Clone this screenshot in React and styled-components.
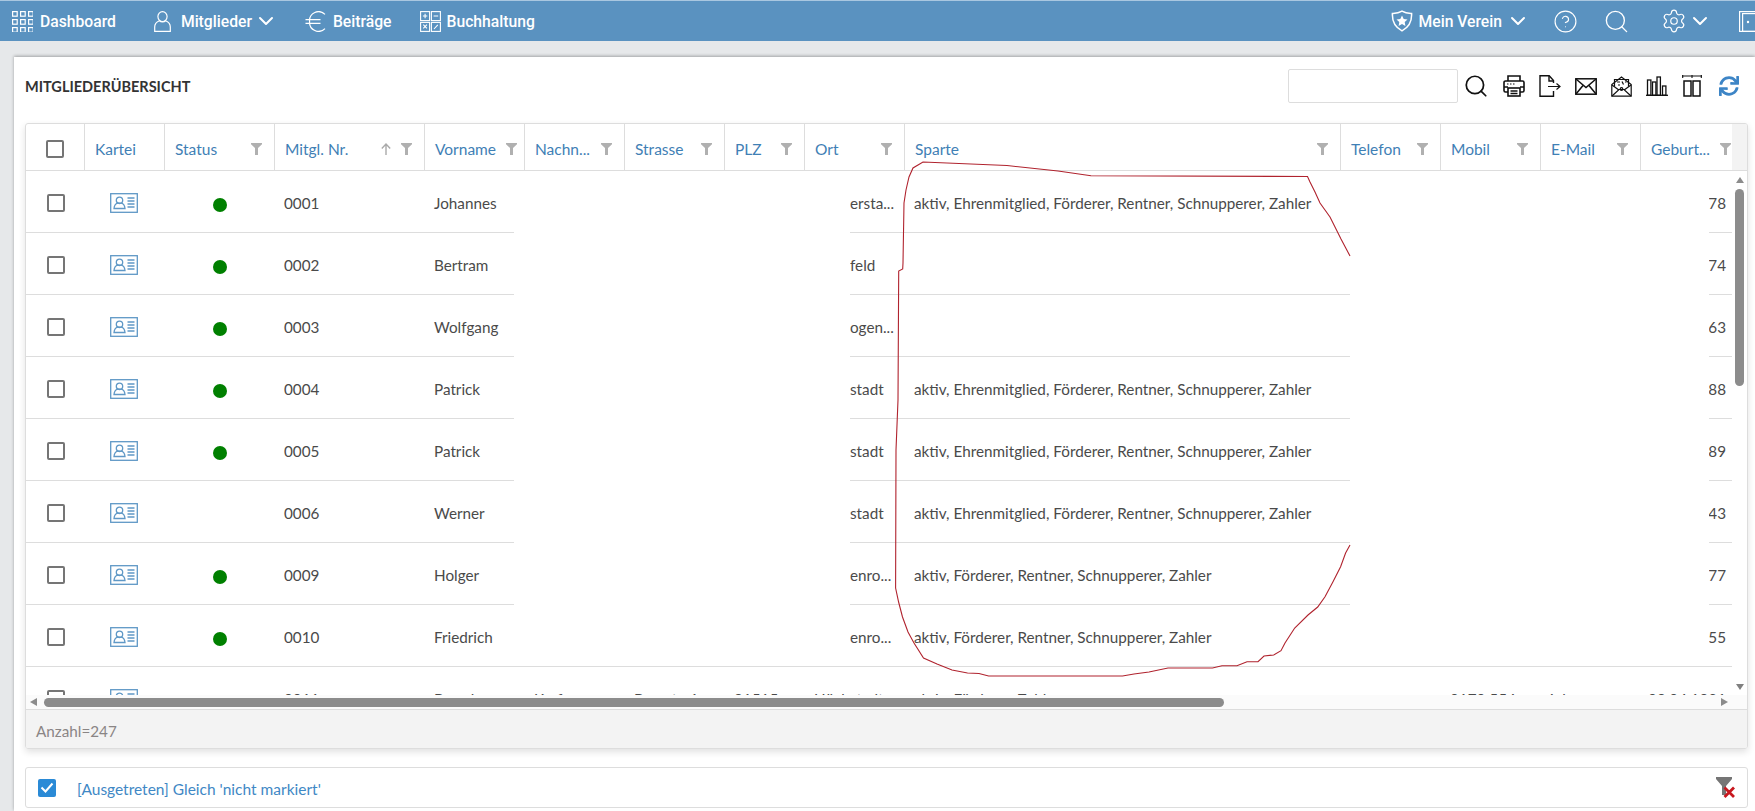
import React from 'react';
import styled, { createGlobalStyle } from 'styled-components';
import { ChevronDown, CircleHelp, Search, Settings } from 'lucide-react';
import { FaSync } from 'react-icons/fa';

const GlobalStyle = createGlobalStyle`
    html, body { margin: 0; padding: 0; height: 100%; }
    body { font-family: "Lato", "Noto Sans", sans-serif; background: #e6e8ea; }
    * { box-sizing: border-box; }
`;

const COLUMNS = '59px 80px 110px 150px 100px 100px 100px 80px 100px 436px 100px 100px 100px 91px';

const Page = styled.div`
    height: 100vh;
    display: flex;
    flex-direction: column;
    overflow: hidden;
`;
const Nav = styled.nav`
    height: 41px;
    flex: none;
    display: flex;
    align-items: center;
    padding-left: 12px;
    background: #5a92c0;
    border-top: 1px solid #a9c7e0;
    color: #fff;
    overflow: hidden;
`;
const NavItem = styled.div`
    display: flex;
    align-items: center;
    flex: none;
    gap: ${(p) => p.$gap ?? 7}px;
    margin-left: ${(p) => p.$ml || 0}px;
    font: 500 15.7px "Roboto", sans-serif;
    white-space: nowrap;
`;
const NavLabel = styled.span`
    display: flex;
    align-items: center;
    gap: ${(p) => p.$gap || 2}px;
`;
const NavRight = styled.div`
    margin-left: auto;
    margin-right: -6px;
    display: flex;
    align-items: center;
`;
const Main = styled.main`
    flex: 1;
    min-height: 0;
    padding: 16px 0 0 14px;
`;
const Card = styled.section`
    height: 100%;
    padding: 12px 7px 0 11px;
    background: #fff;
    box-shadow: 0 -1px 3px rgba(0, 0, 0, 0.3);
`;
const TitleBar = styled.div`
    height: 34px;
    margin-bottom: 20px;
    display: flex;
    align-items: center;
    justify-content: space-between;
`;
const Title = styled.h1`
    margin: 0;
    font-size: 14.5px;
    font-weight: 700;
    color: #333;
`;
const Tools = styled.div`
    display: flex;
    align-items: center;
    gap: 14px;
`;
const SearchInput = styled.input`
    width: 170px;
    height: 34px;
    margin-right: -9px;
    border: 1px solid #ddd;
    border-radius: 2px;
    outline: none;
`;
const RefreshIcon = styled(FaSync)`
    margin: 0 9px 0 3px;
    color: #3d85c6;
`;
const TableFrame = styled.div`
    position: relative;
    height: 626px;
    border: 1px solid #ddd;
    border-radius: 3px;
    box-shadow: 0 3px 7px rgba(0, 0, 0, 0.12);
    overflow: hidden;
`;
const HeaderRow = styled.div`
    display: grid;
    grid-template-columns: ${COLUMNS} 1fr;
    height: 47px;
    border-bottom: 1px solid #ddd;
`;
const HeaderCell = styled.div`
    display: flex;
    align-items: center;
    gap: 10px;
    padding: 3px 12px 0 10px;
    border-right: 1px solid #ddd;
    color: #3f80b5;
    font-size: 15.5px;
    &:nth-child(14) { border-right: none; padding-right: 3px; }
    &:last-child { border-right: none; background: #f3f3f3; padding: 0; }
`;
const CheckHeaderCell = styled(HeaderCell)`
    justify-content: center;
    padding: 3px 0 0;
`;
const HeaderLabel = styled.span`
    flex: 1;
    white-space: nowrap;
`;
const Body = styled.div`
    display: flex;
    height: 524px;
`;
const RowsViewport = styled.div`
    flex: 1;
    overflow: hidden;
`;
const Row = styled.div`
    display: grid;
    grid-template-columns: ${COLUMNS};
    height: 62px;
    border-bottom: 1px solid #ddd;
`;
const Cell = styled.div`
    display: flex;
    align-items: center;
    justify-content: ${(p) => p.$justify || 'flex-start'};
    padding: 3px ${(p) => p.$pr || 0}px 0 ${(p) => p.$pl || 0}px;
    color: #4a4a4a;
    font-size: 15.25px;
    white-space: nowrap;
    overflow: hidden;
`;
const Checkbox = styled.span`
    display: inline-flex;
    align-items: center;
    justify-content: center;
    width: 18px;
    height: 18px;
    flex: none;
    border: ${(p) => (p.$checked ? 'none' : '2px solid #757575')};
    border-radius: 2px;
    background: ${(p) => (p.$checked ? '#2a8ad6' : '#fff')};
`;
const Dot = styled.span`
    width: 14px;
    height: 14px;
    margin-top: 3px;
    border-radius: 50%;
    background: #008000;
`;
const VScroll = styled.div`
    width: 15px;
    flex: none;
    display: flex;
    flex-direction: column;
    align-items: center;
    padding: 6px 0 5px;
    background: #fff;
`;
const VThumb = styled.div`
    width: 9px;
    height: 197px;
    margin-top: 6px;
    border-radius: 5px;
    background: #8c8c8c;
`;
const ArrowUp = styled.i`
    border: 4.5px solid transparent;
    border-top: none;
    border-bottom: 6px solid #8c8c8c;
`;
const ArrowDown = styled.i`
    margin-top: auto;
    border: 4.5px solid transparent;
    border-bottom: none;
    border-top: 6px solid #808080;
`;
const HScroll = styled.div`
    height: 14px;
    display: flex;
    align-items: center;
    padding-left: 4px;
    background: #fbfbfb;
`;
const ArrowLeft = styled.i`
    border: 4.5px solid transparent;
    border-left: none;
    border-right: 7px solid #8c8c8c;
`;
const ArrowRight = styled.i`
    margin-left: auto;
    margin-right: 19px;
    border: 4.5px solid transparent;
    border-right: none;
    border-left: 7px solid #8c8c8c;
`;
const HThumb = styled.div`
    width: 1180px;
    height: 9px;
    margin-left: 7px;
    border-radius: 5px;
    background: #8c8c8c;
`;
const Footer = styled.div`
    height: 40px;
    display: flex;
    align-items: center;
    padding: 2px 0 0 10px;
    border-top: 1px solid #ddd;
    background: #f3f3f3;
    color: #8a8585;
    font-size: 15.25px;
`;
const Redaction = styled.div`
    position: absolute;
    top: 47px;
    left: ${(p) => p.$left}px;
    width: ${(p) => p.$width}px;
    height: 494px;
    background: #fff;
`;
const Scribble = styled.svg`
    position: absolute;
    left: -26px;
    top: -124px;
    pointer-events: none;
`;
const FilterBar = styled.div`
    height: 41px;
    margin-top: 18px;
    display: flex;
    align-items: center;
    gap: 21px;
    padding: 0 11px 0 12px;
    border: 1px solid #ddd;
    border-radius: 3px;
    color: #3f88c5;
    font-size: 15.5px;
`;
const FilterText = styled.span`
    flex: 1;
    padding-top: 3px;
`;

const Grid9 = () => (
    <svg width="21" height="21" viewBox="0 0 21 21" fill="none" stroke="#fff" strokeWidth="1.2">
        {[0, 8, 16].map((y) =>
            [0, 8, 16].map((x) => <rect key={`${x}${y}`} x={x + 0.6} y={y + 0.6} width="4.6" height="4.6" />)
        )}
    </svg>
);
const PersonIcon = () => (
    <svg width="17" height="21" viewBox="0 0 17 21" fill="none" stroke="#fff" strokeWidth="1.2">
        <ellipse cx="8.5" cy="5.6" rx="4.6" ry="4.9" />
        <path d="M5.4 9.8C2.6 11 .7 13 .7 16v4.3h15.6V16c0-3-1.9-5-4.7-6.2-1.6 1.5-4.6 1.5-6.2 0z" />
    </svg>
);
const EuroIcon = () => (
    <svg width="21" height="21" viewBox="0 0 21 21" fill="none" stroke="#fff" strokeWidth="1.2">
        <path d="M20 3.4A9 9 0 0 0 4.6 10.5 9 9 0 0 0 20 17.6" />
        <path d="M.5 8.7h15M.5 12.3h15" />
    </svg>
);
const CalcIcon = () => (
    <svg width="21" height="21" viewBox="0 0 21 21" fill="none" stroke="#fff" strokeWidth="1.1">
        <rect x=".6" y=".6" width="9" height="9" />
        <rect x="11.4" y=".6" width="9" height="9" />
        <rect x=".6" y="11.4" width="9" height="9" />
        <rect x="11.4" y="11.4" width="9" height="9" />
        <path d="M5.1 2.8v4.4M2.9 5h4.4M13.6 5h4.6M3.3 13.600l3.600 3.800M6.900 13.600l-3.600 3.800M14 18l3.800-4.200" />
    </svg>
);
const ShieldStar = () => (
    <svg width="22" height="22" viewBox="0 0 22 22" fill="none">
        <path d="M11 1.200c2.400 1.500 5.400 2.300 9.600 2.200.4 7.800-2.800 14-9.600 17.400C4.200 17.400 1 11.200 1.400 3.400 5.600 3.500 8.600 2.700 11 1.200z" stroke="#fff" strokeWidth="1.5" />
        <path d="M11 5.500l1.700 3.500 3.800.5-2.800 2.600.7 3.800-3.400-1.800-3.400 1.800.7-3.800-2.800-2.600 3.800-.5z" fill="#fff" />
    </svg>
);
const DoorIcon = () => (
    <svg width="22" height="21" viewBox="0 0 22 21" fill="none" stroke="#fff" strokeWidth="1.2">
        <rect x=".6" y=".6" width="24" height="19.8" />
        <rect x="3.6" y="2.6" width="20" height="17.8" />
        <circle cx="9" cy="11" r=".6" fill="#fff" />
    </svg>
);
const FunnelIcon = () => (
    <svg width="11" height="12" viewBox="0 0 11 12" fill="#b0b0b0" style={{ flex: 'none' }}>
        <path d="M0 0h11v1.200L7 5v7H4V5L0 1.200z" />
    </svg>
);
const SortUp = () => (
    <svg width="10" height="12" viewBox="0 0 10 12" fill="none" stroke="#aaa" strokeWidth="1.4" style={{ flex: 'none' }}>
        <path d="M5 12V1M.8 5.400 5 1l4.200 4.400" />
    </svg>
);
const MemberCard = () => (
    <svg width="28" height="20" viewBox="0 0 28 20" fill="none" stroke="#5f98c6" strokeWidth="1.3">
        <rect x=".7" y=".7" width="26.6" height="18.6" />
        <circle cx="9.5" cy="7.3" r="3.2" />
        <path d="M4 15.500c.3-3 2.200-5 3.600-5.400h3.800c1.400.4 3.300 2.400 3.600 5.400z" />
        <path d="M17.5 5h7M17.5 8h7M17.5 11h7M17.5 14h7" />
    </svg>
);
const PrintIcon = () => (
    <svg width="22" height="22" viewBox="0 0 22 22" fill="none" stroke="#111" strokeWidth="1.6">
        <path d="M5 6V1h12v5" />
        <path d="M5 17H2.500A1.500 1.500 0 0 1 1 15.500v-8A1.500 1.500 0 0 1 2.500 6h17A1.500 1.500 0 0 1 21 7.500v8a1.500 1.500 0 0 1-1.500 1.500H17" />
        <rect x="5" y="13" width="12" height="8" />
        <path d="M7.500 16h7M7.500 18.500h7M1 12h4M17 12h4" />
        <path d="M4 9h1.500M7 9h1.500M10 9h1.500" strokeWidth="1.2" />
    </svg>
);
const ExportIcon = () => (
    <svg width="22" height="22" viewBox="0 0 22 22" fill="none" stroke="#111" strokeWidth="1.4">
        <path d="M14.500 8V5.500L10.200.8H1v20.400h13.500V16" />
        <path d="M10 1v5h4.500" />
        <path d="M9 11.500h12M17.500 8.500l3.500 3-3.500 3" strokeWidth="1.2" />
    </svg>
);
const MailIcon = () => (
    <svg width="22" height="17" viewBox="0 0 22 17" fill="none" stroke="#111" strokeWidth="1.5">
        <rect x=".8" y=".8" width="20.4" height="15.4" />
        <path d="M1 1l10 8.500L21 1M1 16l7-8.500M21 16l-7-8.500" />
    </svg>
);
const PaidMailIcon = () => (
    <svg width="21" height="21" viewBox="0 0 21 21" fill="none" stroke="#111" strokeWidth="1.2">
        <path d="M.8 8.500v11.700h19.400V8.500L10.500 1z" />
        <path d="M3.500 10.500V3.500h14v7" />
        <path d="M1 20l7-6.500h5l7 6.500M1 9l6.500 4.800M20 9l-6.500 4.800" />
        <path d="M6 6h3M11 5.500l1.500 3M14 6h1.500M7 9h2" />
        <circle cx="10.5" cy="13" r="1.3" />
    </svg>
);
const ChartIcon = () => (
    <svg width="22" height="20" viewBox="0 0 22 20" fill="none" stroke="#111" strokeWidth="1.3">
        <path d="M0 19.300h22" />
        <rect x="1.5" y="4" width="3.4" height="15.3" />
        <rect x="6.5" y="6" width="3.4" height="13.3" />
        <rect x="11" y="1" width="3.4" height="18.3" />
        <rect x="16.5" y="10" width="3.4" height="9.3" />
    </svg>
);
const ColumnsIcon = () => (
    <svg width="20" height="22" viewBox="0 0 20 22" fill="none" stroke="#111" strokeWidth="1.5">
        <path d="M0 1h20M.7 0v3M19.300 0v3M10 0v3" strokeWidth="1.1" />
        <rect x="2" y="6" width="7" height="15" />
        <rect x="11" y="6" width="7" height="15" />
    </svg>
);
const ClearFilter = () => (
    <svg width="20" height="21" viewBox="0 0 20 21">
        <path d="M0 0h16v2L10 9v9H6V9L0 2z" fill="#757575" />
        <path d="M8.500 10.500l9.500 9.500M18 10.500l-9.500 9.500" stroke="#c8171e" strokeWidth="2.8" />
    </svg>
);
const Tick = () => (
    <svg width="14" height="11" viewBox="0 0 14 11" fill="none" stroke="#fff" strokeWidth="2">
        <path d="M1.500 5.500 5.500 9.500 12.500 1.500" />
    </svg>
);

const HEADERS = ['Kartei', 'Status', 'Mitgl. Nr.', 'Vorname', 'Nachn...', 'Strasse', 'PLZ', 'Ort', 'Sparte', 'Telefon', 'Mobil', 'E-Mail', 'Geburt...'];
const FULL = 'aktiv, Ehrenmitglied, Förderer, Rentner, Schnupperer, Zahler';
const SHORT = 'aktiv, Förderer, Rentner, Schnupperer, Zahler';

const ROWS = [
    { nr: '0001', first: 'Johannes', ort: 'ersta...', sparte: FULL, age: '78', active: true },
    { nr: '0002', first: 'Bertram', ort: 'feld', sparte: '', age: '74', active: true },
    { nr: '0003', first: 'Wolfgang', ort: 'ogen...', sparte: '', age: '63', active: true },
    { nr: '0004', first: 'Patrick', ort: 'stadt', sparte: FULL, age: '88', active: true },
    { nr: '0005', first: 'Patrick', ort: 'stadt', sparte: FULL, age: '89', active: true },
    { nr: '0006', first: 'Werner', ort: 'stadt', sparte: FULL, age: '43', active: false },
    { nr: '0009', first: 'Holger', ort: 'enro...', sparte: SHORT, age: '77', active: true },
    { nr: '0010', first: 'Friedrich', ort: 'enro...', sparte: SHORT, age: '55', active: true },
];

const SCRIBBLE = 'M1350 256L1341 239 1335 227 1330 217 1320 203 1315 192 1310 182 1307.5 176.5 1091 175.7 1058 171 1007 165.5 923 162 913 168 909 177 906 190 904 203 903 263 902.7 269 898.7 271 898 400 896 450 895.6 588 898.6 602 902.5 617 908 632 914 643 923.5 658 937 664 952 670 967.5 673 979 673.5 988.6 676 1122.5 676 1134 674 1149 672 1168 668 1212.5 668 1222 665.7 1237 665.7 1247 661.7 1258 661.7 1264 656 1273.7 655 1281 650.7 1285 643 1294.7 628 1308 615 1317.7 607 1325 596.7 1333 581.7 1340.6 566.7 1345.6 553 1350 545';

const App = () => {
    return (
        <Page>
            <GlobalStyle />
            <Nav>
                <NavItem><Grid9 />Dashboard</NavItem>
                <NavItem $ml={38} $gap={10}><PersonIcon /><NavLabel>Mitglieder<ChevronDown size={24} strokeWidth={2} /></NavLabel></NavItem>
                <NavItem $ml={27}><EuroIcon />Beiträge</NavItem>
                <NavItem $ml={28} $gap={6}><CalcIcon />Buchhaltung</NavItem>
                <NavRight>
                    <NavItem $gap={6}><ShieldStar /><NavLabel $gap={4}>Mein Verein<ChevronDown size={24} strokeWidth={2} /></NavLabel></NavItem>
                    <NavItem $ml={23}><CircleHelp size={25} strokeWidth={1.1} /></NavItem>
                    <NavItem $ml={25}><Search size={27} strokeWidth={1.2} /></NavItem>
                    <NavItem $ml={31} $gap={1}><Settings size={26} strokeWidth={1.1} /><ChevronDown size={24} strokeWidth={2} /></NavItem>
                    <NavItem $ml={27}><DoorIcon /></NavItem>
                </NavRight>
            </Nav>
            <Main>
                <Card>
                    <TitleBar>
                        <Title>MITGLIEDERÜBERSICHT</Title>
                        <Tools>
                            <SearchInput />
                            <Search size={26} strokeWidth={1.6} color="#111" />
                            <PrintIcon />
                            <ExportIcon />
                            <MailIcon />
                            <PaidMailIcon />
                            <ChartIcon />
                            <ColumnsIcon />
                            <RefreshIcon size={20} />
                        </Tools>
                    </TitleBar>
                    <TableFrame>
                        <HeaderRow>
                            <CheckHeaderCell><Checkbox /></CheckHeaderCell>
                            {HEADERS.map((h, i) => (
                                <HeaderCell key={h}>
                                    <HeaderLabel>{h}</HeaderLabel>
                                    {h === 'Mitgl. Nr.' && <SortUp />}
                                    {i > 0 && <FunnelIcon />}
                                </HeaderCell>
                            ))}
                            <HeaderCell />
                        </HeaderRow>
                        <Body>
                            <RowsViewport>
                                {ROWS.map((r) => (
                                    <Row key={r.nr}>
                                        <Cell $justify="center"><Checkbox /></Cell>
                                        <Cell $justify="center" $pr={2}><MemberCard /></Cell>
                                        <Cell $justify="center">{r.active && <Dot />}</Cell>
                                        <Cell $pl={9}>{r.nr}</Cell>
                                        <Cell $pl={9}>{r.first}</Cell>
                                        <Cell /><Cell /><Cell />
                                        <Cell $pl={45}>{r.ort}</Cell>
                                        <Cell $pl={9}>{r.sparte}</Cell>
                                        <Cell /><Cell /><Cell />
                                        <Cell $justify="flex-end" $pr={6}>{r.age}</Cell>
                                    </Row>
                                ))}
                                <Row>
                                    <Cell $justify="center"><Checkbox /></Cell>
                                    <Cell $justify="center" $pr={2}><MemberCard /></Cell>
                                    <Cell />
                                    <Cell $pl={9}>0011</Cell>
                                    <Cell $pl={9}>Bernd</Cell>
                                    <Cell $pl={9}>Kraft</Cell>
                                    <Cell $pl={9}>Bergstr. 1</Cell>
                                    <Cell $pl={9}>91515</Cell>
                                    <Cell $pl={9}>Höchstadt</Cell>
                                    <Cell $pl={9}>aktiv, Förderer, Zahler</Cell>
                                    <Cell />
                                    <Cell $pl={9}>0170 554...</Cell>
                                    <Cell $pl={9}>i.de</Cell>
                                    <Cell $justify="flex-end" $pr={6}>09.04.1981</Cell>
                                </Row>
                            </RowsViewport>
                            <VScroll>
                                <ArrowUp />
                                <VThumb />
                                <ArrowDown />
                            </VScroll>
                        </Body>
                        <HScroll>
                            <ArrowLeft />
                            <HThumb />
                            <ArrowRight />
                        </HScroll>
                        <Footer>Anzahl=247</Footer>
                        <Redaction $left={488} $width={336} />
                        <Redaction $left={1324} $width={359} />
                        <Scribble width="1755" height="811" viewBox="0 0 1755 811" fill="none">
                            <path d={SCRIBBLE} stroke="#b0232e" strokeWidth="1.1" />
                        </Scribble>
                    </TableFrame>
                    <FilterBar>
                        <Checkbox $checked><Tick /></Checkbox>
                        <FilterText>[Ausgetreten] Gleich 'nicht markiert'</FilterText>
                        <ClearFilter />
                    </FilterBar>
                </Card>
            </Main>
        </Page>
    );
};

export default App;
